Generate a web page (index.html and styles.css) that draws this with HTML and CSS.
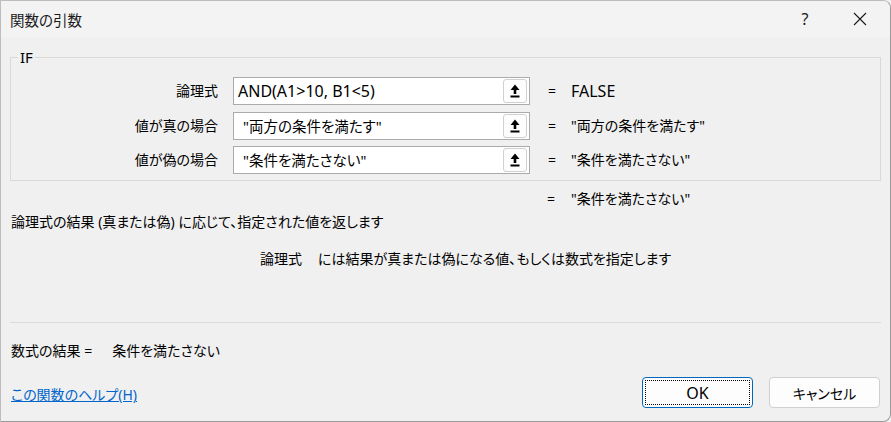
FILE: index.html
```html
<!DOCTYPE html>
<html lang="ja">
<head>
<meta charset="utf-8">
<title>関数の引数</title>
<link rel="stylesheet" href="styles.css">
</head>
<body>
<div class="window">
  <div class="titlebar">
    <span class="title">関数の引数</span>
    <span class="tb-help">?</span>
    <span class="tb-close">
      <svg width="14" height="14" viewBox="0 0 14 14"><path d="M1 1 L13 13 M13 1 L1 13" stroke="#1a1a1a" stroke-width="1.1" fill="none"/></svg>
    </span>
  </div>
  <div class="content">
    <div class="group">
      <span class="legend">IF</span>
      <div class="args">
        <div class="label">論理式</div>
        <div class="field"><span class="ftext lat">AND(A1&gt;10, B1&lt;5)</span><span class="pick"><svg width="10" height="14" viewBox="0 0 10 14"><path d="M5 0.5 L9.5 6 L6.3 6 L6.3 10 L3.7 10 L3.7 6 L0.5 6 Z" fill="#000"/><rect x="0.5" y="11.5" width="9" height="2" fill="#000"/></svg></span></div>
        <div class="eq">=</div><div class="val"><span class="lat">FALSE</span></div>

        <div class="label">値が真の場合</div>
        <div class="field"><span class="ftext q">"両方の条件を満たす"</span><span class="pick"><svg width="10" height="14" viewBox="0 0 10 14"><path d="M5 0.5 L9.5 6 L6.3 6 L6.3 10 L3.7 10 L3.7 6 L0.5 6 Z" fill="#000"/><rect x="0.5" y="11.5" width="9" height="2" fill="#000"/></svg></span></div>
        <div class="eq">=</div><div class="val">"両方の条件を満たす"</div>

        <div class="label">値が偽の場合</div>
        <div class="field"><span class="ftext q">"条件を満たさない"</span><span class="pick"><svg width="10" height="14" viewBox="0 0 10 14"><path d="M5 0.5 L9.5 6 L6.3 6 L6.3 10 L3.7 10 L3.7 6 L0.5 6 Z" fill="#000"/><rect x="0.5" y="11.5" width="9" height="2" fill="#000"/></svg></span></div>
        <div class="eq">=</div><div class="val">"条件を満たさない"</div>
      </div>
    </div>
    <div class="result-row"><span class="eq">=</span><span class="val">"条件を満たさない"</span></div>
    <div class="desc">論理式の結果 (真または偽) に応じて、指定された値を返します</div>
    <div class="argdesc"><span class="argname">論理式</span>には結果が真または偽になる値、もしくは数式を指定します</div>
    <div class="sep"></div>
    <div class="formula-result"><span>数式の結果 =</span><span class="fr-val">条件を満たさない</span></div>
    <div class="footer">
      <a class="help" href="#">この関数のヘルプ(H)</a>
      <div class="buttons">
        <button class="btn ok"><span class="focus"><span class="lat">OK</span></span></button>
        <button class="btn">キャンセル</button>
      </div>
    </div>
  </div>
</div>
</body>
</html>
```

FILE: styles.css
```css
* { box-sizing: border-box; }
html, body { margin: 0; padding: 0; background: #f0f0f0; }
body {
  font-family: "Noto Sans", "Noto Sans CJK JP", sans-serif;
  font-size: 14px;
  color: #000;
  font-feature-settings: "palt";
}
.lat { font-size: 16px; }
.window {
  width: 891px;
  height: 422px;
  background: #f0f0f0;
  border: 1px solid #9a9a9a;
  border-top-color: #bdbdbd;
  border-left-color: #bdbdbd;
  border-radius: 0 8px 8px 0;
  overflow: hidden;
  display: flex;
  flex-direction: column;
}
.titlebar {
  height: 36px;
  background: #f3f3f3;
  display: flex;
  align-items: center;
  padding-left: 9px;
  flex: none;
}
.title { font-size: 14.5px; color: #1a1a1a; flex: 1; line-height: 20px; margin-top: 1px; }
.tb-help { width: 20px; text-align: center; font-size: 16px; color: #1a1a1a; margin-right: 38px; }
.tb-close { width: 14px; height: 14px; margin-right: 23px; display: flex; }
.content { padding: 0 9px; flex: 1; display: flex; flex-direction: column; }
.group {
  position: relative;
  margin-top: 20px;
  height: 124px;
  border: 1px solid #d9d9d9;
  padding-top: 19px;
}
.legend {
  position: absolute;
  top: -11px;
  left: 7px;
  padding: 0 2px;
  background: #f0f0f0;
  line-height: 20px;
  font-size: 15px;
}
.args {
  display: grid;
  grid-template-columns: 207px 312px 26px auto;
  grid-auto-rows: 28px;
  row-gap: 6.5px;
  column-gap: 0;
}
.label { text-align: right; line-height: 28px; }
.field {
  margin-left: 15px;
  background: #fff;
  border: 1px solid #ababab;
  display: flex;
  align-items: center;
  padding: 0 2px 0 4px;
}
.ftext { flex: 1; line-height: 26px; white-space: nowrap; font-size: 14.5px; }
.ftext.lat { font-size: 16px; }
.ftext.q { padding-left: 5px; }
.pick {
  width: 24px;
  height: 24px;
  border: 1px solid #d0d0d0;
  border-radius: 3px;
  background: #fdfdfd;
  display: flex;
  align-items: center;
  justify-content: center;
}
.eq { line-height: 28px; text-align: right; }
.val { line-height: 28px; padding-left: 15px; white-space: nowrap; }
.result-row { display: flex; margin-left: 535px; margin-top: 8px; line-height: 20px; }
.result-row .eq { line-height: 20px; width: 10px; }
.result-row .val { line-height: 20px; padding-left: 16px; }
.desc { line-height: 20px; margin-top: 3px; padding-left: 1px; }
.argdesc { line-height: 20px; margin-top: 17px; padding-left: 250px; }
.argname { margin-right: 16px; }
.sep { height: 1px; background: #dadada; margin-top: 53px; }
.formula-result { line-height: 20px; margin-top: 18px; padding-left: 1px; display: flex; }
.fr-val { margin-left: 20px; }
.footer { display: flex; align-items: flex-start; }
.help { color: #0066cc; text-decoration: underline; flex: 1; line-height: 20px; padding-left: 1px; margin-top: 24px; }
.buttons { display: flex; gap: 16px; margin-right: 1px; margin-top: 16px; }
.btn {
  width: 111px;
  height: 31px;
  background: #fdfdfd;
  border: 1px solid #d0d0d0;
  border-radius: 4px;
  font-family: inherit;
  font-size: 14px;
  color: #000;
  padding: 0;
  display: flex;
  align-items: center;
  justify-content: center;
  font-feature-settings: "palt";
}
.btn.ok { border: 1px solid #0067c0; padding: 2px; }
.focus {
  width: 100%;
  height: 100%;
  border: 1px dotted #000;
  display: flex;
  align-items: center;
  justify-content: center;
}
```
